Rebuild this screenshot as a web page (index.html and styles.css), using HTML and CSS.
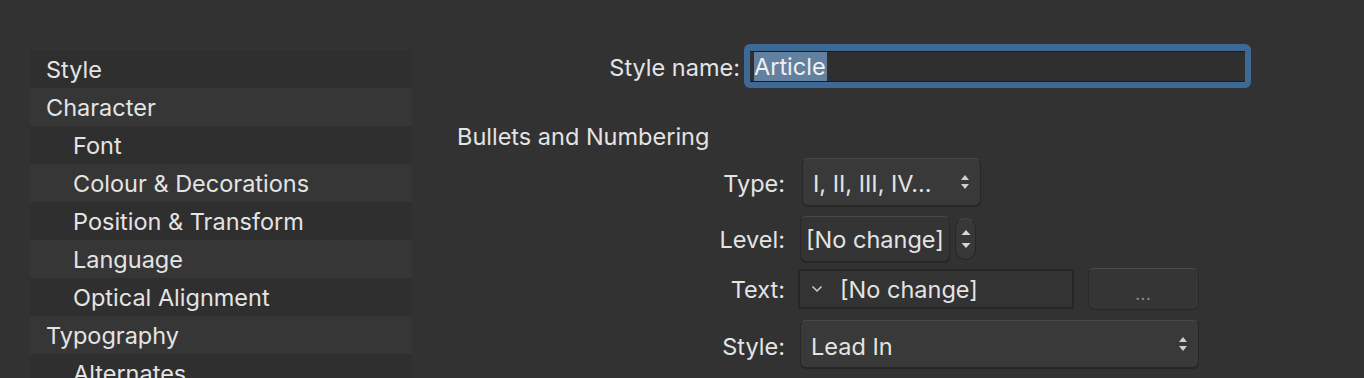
FILE: index.html
```html
<!DOCTYPE html>
<html lang="en">
<head>
    <meta charset="UTF-8">
    <meta name="viewport" content="width=device-width, initial-scale=1.0">
    <title>Edit Text Style</title>
    <link rel="stylesheet" href="styles.css">
</head>
<body>
    <div class="dialog">
        <ul class="sidebar">
            <li class="item">Style</li>
            <li class="item">Character</li>
            <li class="item sub">Font</li>
            <li class="item sub">Colour &amp; Decorations</li>
            <li class="item sub">Position &amp; Transform</li>
            <li class="item sub">Language</li>
            <li class="item sub">Optical Alignment</li>
            <li class="item">Typography</li>
            <li class="item sub">Alternates</li>
        </ul>

        <div class="panel">
            <div class="name-row">
                <label class="name-label">Style name:</label>
                <div class="focus-ring">
                    <div class="name-field"><span class="selected">Article</span></div>
                </div>
            </div>

            <h2 class="section">Bullets and Numbering</h2>

            <div class="row row-type">
                <label class="label">Type:</label>
                <div class="popup type-popup">
                    <span>I, II, III, IV...</span>
                    <svg class="arrows" width="10" height="16" viewBox="0 0 10 16"><path d="M5 1 L9 6 L1 6 Z M5 15 L9 10 L1 10 Z" fill="#cfcfcf"/></svg>
                </div>
            </div>

            <div class="row row-level">
                <label class="label">Level:</label>
                <div class="popup level-popup"><span>[No change]</span></div>
                <div class="stepper">
                    <svg width="12" height="30" viewBox="0 0 12 30"><path d="M6 6 L10.5 11 L1.5 11 Z M6 24 L10.5 19 L1.5 19 Z" fill="#d6d6d6"/></svg>
                </div>
            </div>

            <div class="row row-text">
                <label class="label">Text:</label>
                <div class="combo">
                    <svg class="chevron" width="12" height="8" viewBox="0 0 12 8"><polyline points="1.5,1.5 6,6 10.5,1.5" fill="none" stroke="#d0d0d0" stroke-width="1.5"/></svg>
                    <span>[No change]</span>
                </div>
                <button type="button" class="more">...</button>
            </div>

            <div class="row row-style">
                <label class="label">Style:</label>
                <div class="popup style-popup">
                    <span>Lead In</span>
                    <svg class="arrows" width="10" height="16" viewBox="0 0 10 16"><path d="M5 1 L9 6 L1 6 Z M5 15 L9 10 L1 10 Z" fill="#cfcfcf"/></svg>
                </div>
            </div>
        </div>
    </div>
</body>
</html>
```

FILE: styles.css
```css
body {
    margin: 0;
    background-color: #323232;
    color: #e4e4e4;
    font-family: Inter, "Noto Sans", sans-serif;
    font-size: 23.5px;
    height: 378px;
    overflow: hidden;
}
.dialog {
    display: flex;
}
.sidebar {
    list-style: none;
    margin: 50px 0 0 30px;
    padding: 0;
    width: 382px;
}
.item {
    height: 36px;
    line-height: 36px;
    padding-top: 2px;
    padding-left: 16px;
    background-color: #2f2f2f;
}
.item:nth-child(even) {
    background-color: #363636;
}
.item.sub {
    padding-left: 43px;
}
.panel {
    margin-left: 45px;
    padding-top: 44px;
    width: 800px;
}
.name-row {
    display: flex;
    align-items: center;
    height: 44px;
}
.name-label {
    width: 283px;
    text-align: right;
    margin-right: 4px;
    padding-top: 2px;
}
.focus-ring {
    width: 495px;
    height: 31px;
    padding: 7px 6px 6px 6px;
    background-color: #3e6995;
    border-radius: 6px;
}
.name-field {
    height: 29px;
    background-color: #2f2f2f;
    border-top: 1px solid #1c1c1c;
    border-bottom: 1px solid #1c1c1c;
    padding-left: 4px;
    display: flex;
    align-items: center;
}
.selected {
    background-color: #63809f;
    color: #f0f0f0;
    line-height: 29px;
    padding-right: 1px;
}
.section {
    font-size: 23.5px;
    font-weight: normal;
    margin: 34px 0 0 0;
    height: 30px;
    line-height: 30px;
}
.row {
    display: flex;
    align-items: center;
}
.label {
    width: 328px;
    text-align: right;
    flex-shrink: 0;
}
.popup {
    box-sizing: border-box;
    display: flex;
    align-items: center;
    justify-content: space-between;
    background-color: #393939;
    border: 1px solid #272727;
    border-top-color: #484848;
    border-radius: 6px;
    box-shadow: 0 1px 0 #262626;
    padding: 0 10px;
}
.row-type {
    margin-top: 6px;
}
.row-type .label,
.type-popup span {
    padding-top: 2px;
}
.type-popup {
    width: 179px;
    height: 48px;
    margin-left: 17px;
}
.row-level {
    margin-top: 10px;
}
.level-popup {
    width: 150px;
    height: 46px;
    margin-left: 15px;
    padding: 0 5px;
    background-color: #343434;
    white-space: nowrap;
}
.stepper {
    box-sizing: border-box;
    width: 21px;
    height: 42px;
    margin-left: 5px;
    border: 1px solid #272727;
    border-top-color: #454545;
    border-radius: 10px;
    background-color: #383838;
    display: flex;
    align-items: center;
    justify-content: center;
}
.row-text {
    margin-top: 6px;
}
.combo {
    box-sizing: border-box;
    width: 276px;
    height: 40px;
    margin-left: 13px;
    border: 2px solid #262626;
    background-color: #333333;
    display: flex;
    align-items: center;
    padding-left: 11px;
    white-space: nowrap;
}
.chevron {
    margin-right: 17px;
}
.more {
    box-sizing: border-box;
    width: 111px;
    height: 42px;
    margin-left: 14px;
    background-color: #353535;
    border: 1px solid #282828;
    border-top-color: #4a4a4a;
    border-radius: 6px;
    color: #8c8c8c;
    font-family: Inter, "Noto Sans", sans-serif;
    font-size: 13px;
    font-weight: bold;
    padding-top: 12px;
    letter-spacing: 1px;
}
.row-style {
    margin-top: 10px;
}
.row-style .label,
.style-popup span {
    padding-top: 5px;
}
.style-popup {
    width: 399px;
    height: 48px;
    margin-left: 15px;
}
```
